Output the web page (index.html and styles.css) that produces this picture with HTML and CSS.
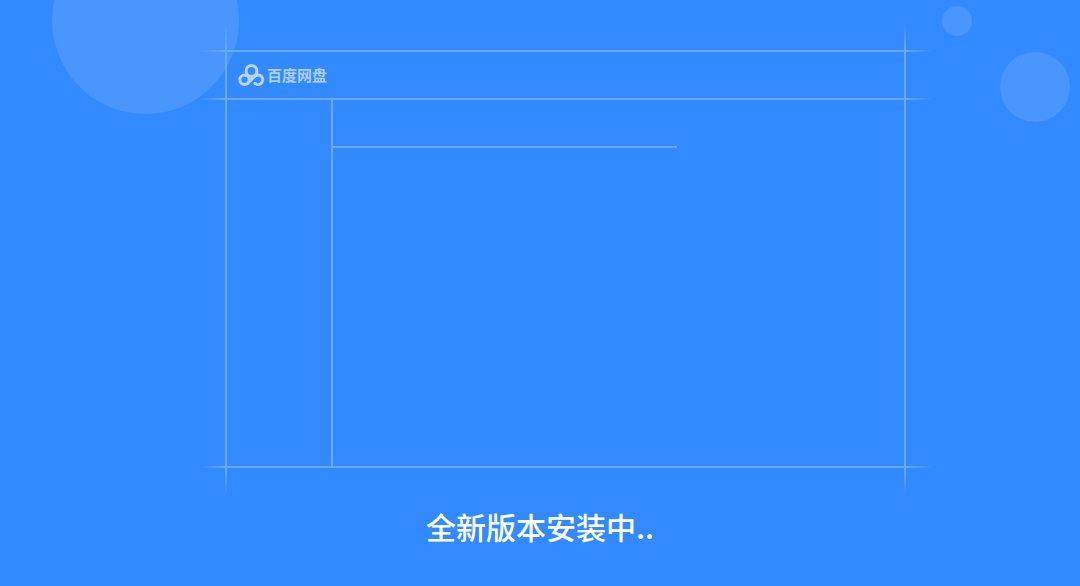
FILE: index.html
```html
<!DOCTYPE html>
<html lang="zh-CN">
<head>
    <meta charset="UTF-8">
    <meta name="viewport" content="width=device-width, initial-scale=1.0">
    <title>百度网盘</title>
    <link rel="stylesheet" href="styles.css">
</head>
<body>

    <!-- Background bubbles -->
    <div class="bubble bubble-large"></div>
    <div class="bubble bubble-small"></div>
    <div class="bubble bubble-medium"></div>

    <main class="splash">
        <!-- Window outline -->
        <div class="frame">
            <header class="frame-header">
                <svg class="logo" viewBox="0 0 27 22" aria-hidden="true">
                    <circle cx="13.5" cy="6.9" r="5.4"/>
                    <circle cx="6.5" cy="15.8" r="4.7"/>
                    <path d="M10 18.9 L17 12.2 A4.7 4.7 0 1 1 17 19.4"/>
                </svg>
                <span class="brand">百度网盘</span>
            </header>
            <div class="frame-body">
                <div class="sidebar"></div>
                <div class="content">
                    <div class="toolbar"></div>
                </div>
            </div>
            <span class="line-left"></span>
            <span class="line-right"></span>
            <span class="line-bottom"></span>
        </div>

        <p class="status">全新版本安装中..</p>
    </main>

</body>
</html>
```

FILE: styles.css
```css
* {
    margin: 0;
    padding: 0;
    box-sizing: border-box;
}

body {
    position: relative;
    min-height: 100vh;
    overflow: hidden;
    background-color: #338aff;
    color: white;
    font-family: "Noto Sans CJK SC", sans-serif;
}

.bubble {
    position: absolute;
    border-radius: 50%;
    background-color: #4a96ff;
}

.bubble-large {
    top: -73px;
    left: 52px;
    width: 187px;
    height: 187px;
}

.bubble-small {
    top: 6px;
    right: 108px;
    width: 30px;
    height: 30px;
}

.bubble-medium {
    top: 52px;
    right: 10px;
    width: 70px;
    height: 70px;
}

.splash {
    position: relative;
    display: flex;
    flex-direction: column;
    min-height: 100vh;
    padding-top: 50px;
}

.frame {
    position: relative;
    display: flex;
    flex: 1;
    flex-direction: column;
    margin: 0 174px 0 225px;
}

.frame-header {
    position: relative;
    display: flex;
    align-items: center;
    gap: 2px;
    height: 50px;
    padding-left: 13px;
}

/* Guide lines run past the corners and fade out */
.frame-header::before,
.frame-header::after,
.line-bottom {
    content: "";
    position: absolute;
    left: -27px;
    right: -27px;
    height: 2px;
    background: linear-gradient(to right, transparent, #69a9ff 27px, #69a9ff calc(100% - 27px), transparent);
}

.frame-header::before {
    top: 0;
}

.frame-header::after,
.line-bottom {
    bottom: 0;
}

.line-left,
.line-right {
    position: absolute;
    top: -27px;
    bottom: -27px;
    width: 2px;
    background: linear-gradient(to bottom, transparent, #69a9ff 27px, #69a9ff calc(100% - 27px), transparent);
}

.line-left {
    left: 0;
}

.line-right {
    right: 0;
}

.logo {
    width: 27px;
    height: 22px;
    fill: none;
    stroke: #b8d7ff;
    stroke-width: 3;
    stroke-linecap: round;
}

.brand {
    color: #a9ceff;
    font-size: 15px;
    font-weight: 700;
    line-height: 22px;
}

.frame-body {
    display: flex;
    flex: 1;
}

.sidebar {
    width: 108px;
    border-right: 2px solid #69a9ff;
}

.content {
    flex: 1;
}

.toolbar {
    width: 60%;
    height: 48px;
    border-bottom: 2px solid #69a9ff;
}

.status {
    padding: 37px 0 39px;
    font-size: 30px;
    font-weight: 500;
    line-height: 42px;
    text-align: center;
}
```
